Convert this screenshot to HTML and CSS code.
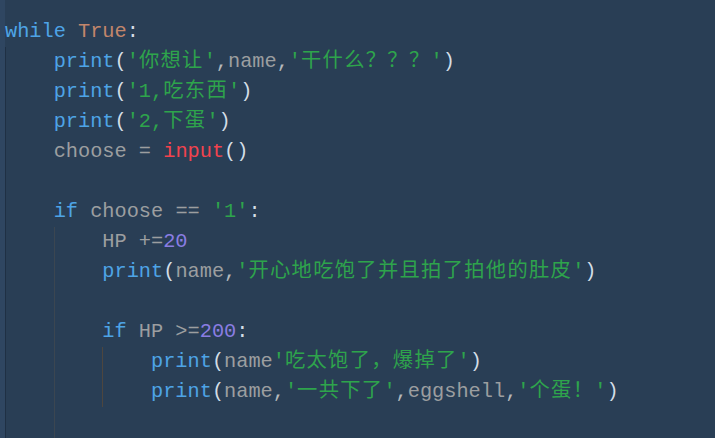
FILE: index.html
```html
<!DOCTYPE html>
<html lang="zh-CN">
<head>
<meta charset="utf-8">
<title>code</title>
<link rel="stylesheet" href="styles.css">
</head>
<body>
<div class="editor">
  <div class="gutter"></div>
  <div class="code">
    <div class="line"><span class="kw">while</span> <span class="const">True</span><span class="p">:</span></div>
    <div class="block g0">
      <div class="line"><span class="kw">print</span><span class="p">(</span><span class="s">'<span class="cjk">你想让</span>'</span><span class="c">,</span><span class="id">name</span><span class="c">,</span><span class="s">'<span class="cjk">干什么？？？</span>'</span><span class="p">)</span></div>
      <div class="line"><span class="kw">print</span><span class="p">(</span><span class="s">'1,<span class="cjk">吃东西</span>'</span><span class="p">)</span></div>
      <div class="line"><span class="kw">print</span><span class="p">(</span><span class="s">'2,<span class="cjk">下蛋</span>'</span><span class="p">)</span></div>
      <div class="line"><span class="id">choose = </span><span class="fn">input</span><span class="p">()</span></div>
      <div class="line empty"></div>
      <div class="line"><span class="kw">if</span> <span class="id">choose == </span><span class="s">'1'</span><span class="p">:</span></div>
      <div class="block g1">
        <div class="line"><span class="id">HP +=</span><span class="num">20</span></div>
        <div class="line"><span class="kw">print</span><span class="p">(</span><span class="id">name</span><span class="c">,</span><span class="s">'<span class="cjk">开心地吃饱了并且拍了拍他的肚皮</span>'</span><span class="p">)</span></div>
        <div class="line empty"></div>
        <div class="line"><span class="kw">if</span> <span class="id">HP &gt;=</span><span class="num">200</span><span class="p">:</span></div>
        <div class="block g2">
          <div class="line"><span class="kw">print</span><span class="p">(</span><span class="id">name</span><span class="s">'<span class="cjk">吃太饱了，爆掉了</span>'</span><span class="p">)</span></div>
          <div class="line"><span class="kw">print</span><span class="p">(</span><span class="id">name</span><span class="c">,</span><span class="s">'<span class="cjk">一共下了</span>'</span><span class="c">,</span><span class="id">eggshell</span><span class="c">,</span><span class="s">'<span class="cjk">个蛋！</span>'</span><span class="p">)</span></div>
        </div>
        <div class="line empty"></div>
        <div class="line empty"></div>
      </div>
    </div>
  </div>
</div>
</body>
</html>
```
FILE: styles.css
```css
html, body {
  margin: 0;
  padding: 0;
  height: 100%;
  overflow: hidden;
  background: #293e55;
}

.editor {
  display: flex;
  height: 100vh;
  background: #293e55;
}

.gutter {
  width: 5px;
  flex: none;
  background: #2f4661;
}

.code {
  flex: 1;
  padding-top: 17px;
  font-family: "Liberation Mono", "Noto Sans CJK SC", monospace;
  font-size: 20.3px;
  line-height: 30px;
  color: #9c9ea0;
}

.line {
  height: 30px;
  white-space: pre;
}

.block {
  padding-left: calc(4ch - 1px);
  border-left: 1px solid transparent;
}

.g0 { border-left-color: #1f3044; }
.g1 { border-left-color: #3b4651; }
.g2 { border-left-color: #4d463f; }

.kw { color: #4ea4e6; }
.const { color: #c3866b; }
.id { color: #9c9ea0; }
.s { color: #2ea44c; }
.num { color: #8a7de2; }
.fn { color: #f2434e; }
.p { color: #d3dde6; }
.c { color: #b4b8bc; }

.cjk {
  font-family: "Noto Sans CJK SC", sans-serif;
  line-height: 0;
  letter-spacing: 1.3px;
}
```
